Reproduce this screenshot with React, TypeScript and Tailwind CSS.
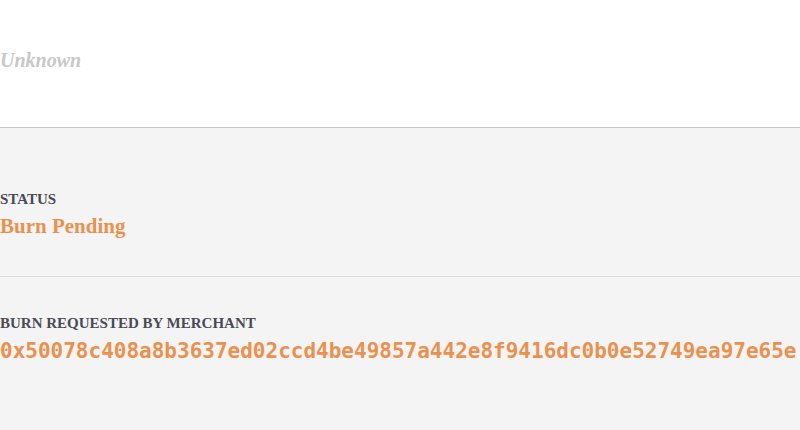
export default function App() {
  const hash =
    "0x50078c408a8b3637ed02ccd4be49857a442e8f9416dc0b0e52749ea97e65e";

  return (
    <div className="w-[800px] h-[430px] overflow-hidden bg-[#f4f4f4] font-['Liberation_Serif',serif]">
      {/* Merchant name */}
      <div className="h-[128px] bg-white border-b border-[#c8c8c8] pt-[47px]">
        <p className="text-[20px] leading-[26px] font-bold italic text-[#c8c8c8]">Unknown</p>
      </div>

      {/* Status */}
      <div className="h-[149px] border-b border-[#dcdcdc] pt-[62px]">
        <p className="text-[15px] leading-[18px] font-bold text-[#4a4a55]">STATUS</p>
        <p className="mt-[5px] text-[21px] leading-[26px] font-bold text-[#ea9150]">Burn Pending</p>
      </div>

      {/* Burn request */}
      <div className="pt-[37px]">
        <p className="text-[15px] leading-[18px] font-bold text-[#4a4a55]">BURN REQUESTED BY MERCHANT</p>
        <p className="mt-[6px] whitespace-nowrap text-[21px] leading-[26px] font-bold text-[#ea9150] font-['DejaVu_Sans_Mono',monospace]">
          {hash}
        </p>
      </div>
    </div>
  );
}
